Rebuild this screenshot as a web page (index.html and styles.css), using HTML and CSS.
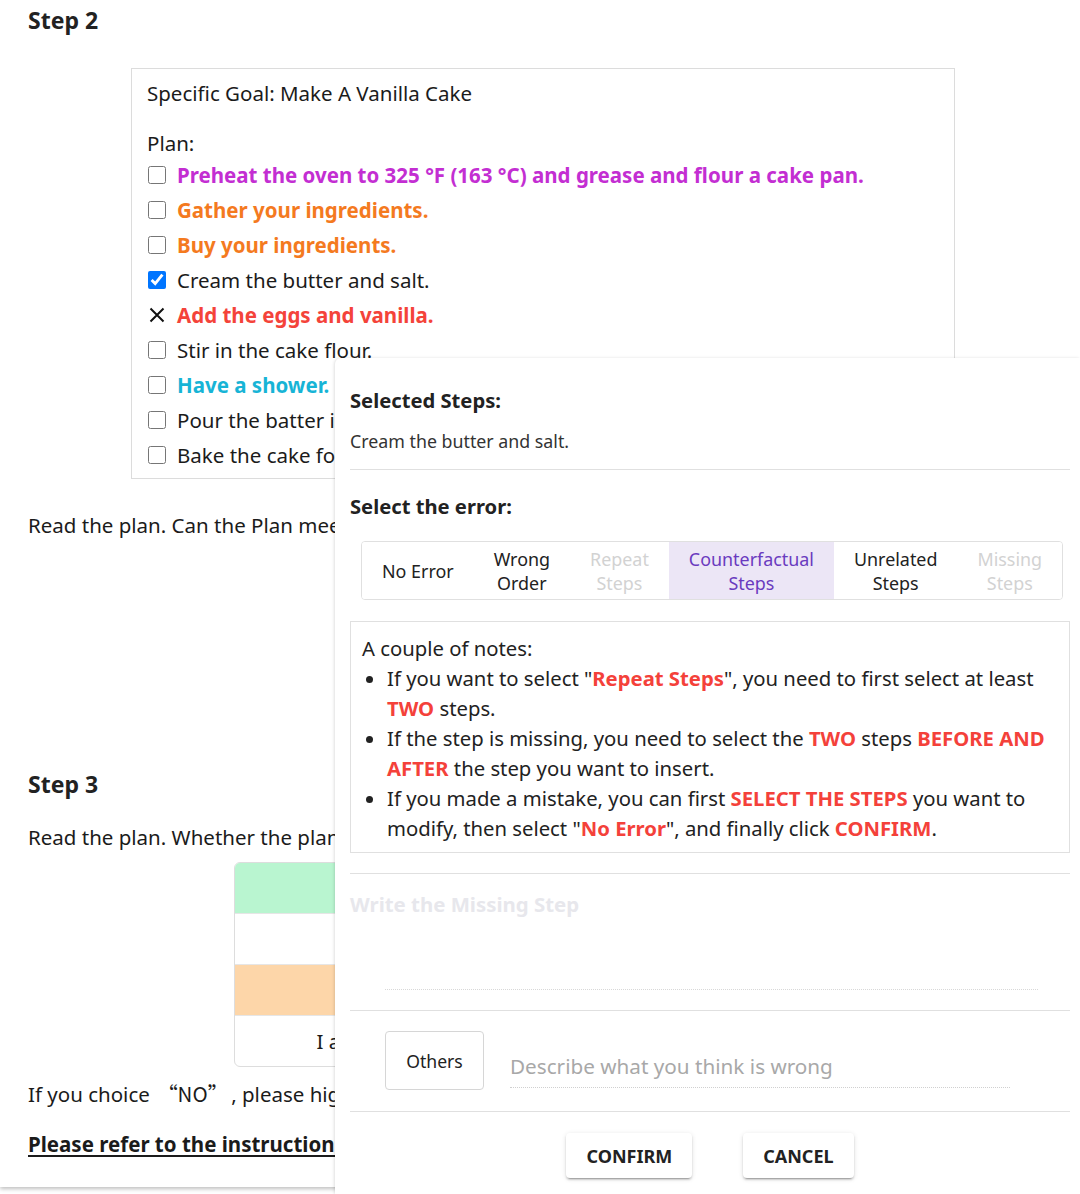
FILE: index.html
```html
<!DOCTYPE html>
<html lang="en">
<head>
<meta charset="utf-8">
<title>Plan annotation</title>
<link rel="stylesheet" href="styles.css">
</head>
<body>
<main class="page">
  <h2 class="step-title">Step 2</h2>
  <section class="plan-box">
    <p class="goal">Specific Goal: Make A Vanilla Cake</p>
    <p class="plan-label">Plan:</p>
    <ul class="plan-list">
      <li class="plan-item"><input type="checkbox" class="cb"><span class="t-purple">Preheat the oven to 325 °F (163 °C) and grease and flour a cake pan.</span></li>
      <li class="plan-item"><input type="checkbox" class="cb"><span class="t-orange">Gather your ingredients.</span></li>
      <li class="plan-item"><input type="checkbox" class="cb"><span class="t-orange">Buy your ingredients.</span></li>
      <li class="plan-item"><input type="checkbox" class="cb" checked><span>Cream the butter and salt.</span></li>
      <li class="plan-item"><svg class="xmark" width="18" height="18" viewBox="0 0 18 18"><path d="M2.5 2.5 L15.5 15.5 M15.5 2.5 L2.5 15.5" stroke="#111" stroke-width="2" fill="none"/></svg><span class="t-red">Add the eggs and vanilla.</span></li>
      <li class="plan-item"><input type="checkbox" class="cb"><span>Stir in the cake flour.</span></li>
      <li class="plan-item"><input type="checkbox" class="cb"><span class="t-cyan">Have a shower.</span></li>
      <li class="plan-item"><input type="checkbox" class="cb"><span>Pour the batter into the pan.</span></li>
      <li class="plan-item"><input type="checkbox" class="cb"><span>Bake the cake for 1 hour 15 minutes.</span></li>
    </ul>
  </section>
  <p class="text question">Read the plan. Can the Plan meet the Specific Goal?</p>
  <div class="answer-space"></div>
  <h2 class="step-title">Step 3</h2>
  <p class="text question2">Read the plan. Whether the plan contains errors?</p>
  <div class="choice-table">
    <div class="choice-row row-green">YES</div>
    <div class="choice-row">The plan has no errors</div>
    <div class="choice-row row-orange">NO</div>
    <div class="choice-row">I am not sure whether the plan meets the goal</div>
  </div>
  <p class="text note">If you choice <span class="cjk">“NO”</span>, please highlight the wrong steps.</p>
  <p class="text refer">Please refer to the instruction for more details.</p>
</main>

<div class="dialog">
  <h3 class="d-title">Selected Steps:</h3>
  <p class="d-selected">Cream the butter and salt.</p>
  <hr class="d-rule">
  <h3 class="d-title second">Select the error:</h3>
  <div class="toggle-group">
    <button class="tg">No Error</button>
    <button class="tg">Wrong<br>Order</button>
    <button class="tg disabled">Repeat<br>Steps</button>
    <button class="tg selected">Counterfactual<br>Steps</button>
    <button class="tg">Unrelated<br>Steps</button>
    <button class="tg disabled">Missing<br>Steps</button>
  </div>
  <div class="notes">
    <p class="notes-head">A couple of notes:</p>
    <ul class="notes-list">
      <li>If you want to select "<b class="hl">Repeat Steps</b>", you need to first select at least <b class="hl">TWO</b> steps.</li>
      <li>If the step is missing, you need to select the <b class="hl">TWO</b> steps <b class="hl">BEFORE AND</b> <b class="hl">AFTER</b> the step you want to insert.</li>
      <li>If you made a mistake, you can first <b class="hl">SELECT THE STEPS</b> you want to modify, then select "<b class="hl">No Error</b>", and finally click <b class="hl">CONFIRM</b>.</li>
    </ul>
  </div>
  <hr class="d-rule r2">
  <h3 class="d-title missing">Write the Missing Step</h3>
  <div class="missing-field"></div>
  <hr class="d-rule r3">
  <div class="others-row">
    <button class="others-btn">Others</button>
    <div class="others-input">Describe what you think is wrong</div>
  </div>
  <hr class="d-rule r4">
  <div class="actions">
    <button class="act">CONFIRM</button>
    <button class="act">CANCEL</button>
  </div>
</div>
</body>
</html>
```

FILE: styles.css
```css
* { box-sizing: border-box; }
html, body {
  margin: 0;
  padding: 0;
  background: #fff;
  width: 1080px;
  height: 1194px;
  overflow: hidden;
}
body {
  font-family: "Noto Sans", "Open Sans", sans-serif;
  color: #1b1b1b;
  position: relative;
}
p { margin: 0; }

.page {
  padding: 5px 28px 28px;
  box-shadow: 0 2px 4px rgba(0,0,0,0.25);
  background: #fff;
}
.step-title {
  margin: 0;
  font-size: 23px;
  font-weight: 700;
  line-height: 30px;
  color: #222;
}
.plan-box {
  margin: 33px 0 0 103px;
  width: 824px;
  border: 1px solid #dcdcdc;
  padding: 9px 15px 6px;
}
.goal, .plan-label, .text {
  font-size: 20.5px;
  line-height: 30px;
}
.plan-label { margin-top: 21px; line-height: 28px; }
.plan-list { list-style: none; margin: 0; padding: 0; }
.plan-item {
  display: flex;
  align-items: center;
  height: 35px;
  font-size: 20.5px;
  gap: 11px;
}
.cb {
  width: 18px;
  height: 18px;
  margin: 0 0 0 1px;
  flex: none;
}
.xmark { flex: none; margin-left: 1px; }
.t-purple { color: #c32ed2; font-weight: 700; }
.t-orange { color: #f47a1f; font-weight: 700; }
.t-red { color: #f4433a; font-weight: 700; }
.t-cyan { color: #17b4d6; font-weight: 700; }

.question { margin-top: 31px; }
.answer-space { height: 229px; }
.question2 { margin-top: 23px; }
.choice-table {
  margin: 10px auto 0;
  width: 612px;
  border: 1px solid #ddd;
  border-radius: 6px;
  overflow: hidden;
}
.choice-row {
  height: 51px;
  display: flex;
  align-items: center;
  justify-content: center;
  font-size: 20.5px;
  border-top: 1px solid #e6e6e6;
}
.choice-row:first-child { border-top: none; height: 50px; }
.row-green { background: #b9f5d0; }
.row-orange { background: #fdd6a9; }
.note { margin-top: 11px; }
.cjk { font-family: "Noto Sans CJK SC", sans-serif; padding: 0 3px 0 2px; }
.refer {
  margin-top: 20px;
  font-weight: 700;
  text-decoration: underline;
  text-underline-offset: 3px;
}

/* dialog overlay */
.dialog {
  position: absolute;
  left: 335px;
  top: 358px;
  right: 0;
  bottom: 0;
  background: #fff;
  border-top-left-radius: 6px;
  box-shadow: -1px 0 3px rgba(0,0,0,0.12);
  padding: 28px 10px 0 15px;
  font-family: "Noto Sans", "Open Sans", sans-serif;
  color: #333;
}
.d-title {
  margin: 0;
  font-size: 20.2px;
  line-height: 28px;
  font-weight: 700;
  color: #222;
}
.d-title.second { margin-top: 22px; }
.d-selected {
  margin-top: 14px;
  font-size: 17.8px;
  line-height: 26px;
  color: #333;
}
.d-rule {
  margin: 15px 0 0;
  border: none;
  border-top: 1px solid #e0e0e0;
  height: 0;
}
.toggle-group {
  margin: 21px 0 0 11px;
  display: inline-flex;
  border: 1px solid #e0e0e0;
  border-radius: 4px;
  height: 59px;
  overflow: hidden;
}
.tg {
  font-family: inherit;
  background: #fff;
  border: none;
  padding: 0 20px;
  font-size: 17.9px;
  line-height: 24px;
  color: #222;
  text-align: center;
}
.tg.disabled { color: #d2d2d2; }
.tg.selected { background: #ece6f6; color: #6a3bbf; }

.notes {
  margin-top: 21px;
  border: 1px solid #e0e0e0;
  padding: 11px 10px 9px 11px;
  font-size: 20.3px;
  line-height: 30px;
  color: #222;
}
.notes-list { margin: 0; padding-left: 25px; }
.hl { color: #f4413a; font-weight: 700; }

.d-rule.r2 { margin-top: 20px; }
.d-title.missing { margin-top: 16px; color: #e7e7ec; font-size: 20.4px; }
.missing-field {
  margin-left: 35px;
  width: 653px;
  height: 72px;
  border-bottom: 1px dotted #d8d8d8;
}
.d-rule.r3 { margin-top: 20px; }
.others-row {
  margin: 20px 0 0 35px;
  display: flex;
  align-items: stretch;
  gap: 26px;
  height: 59px;
}
.others-btn {
  font-family: inherit;
  width: 99px;
  background: #fff;
  border: 1px solid #d6d6d6;
  border-radius: 4px;
  font-size: 17.6px;
  color: #222;
}
.others-input {
  width: 500px;
  align-self: flex-end;
  height: 34px;
  margin-bottom: 2px;
  border-bottom: 1px dotted #d0d0d0;
  font-size: 20.7px;
  line-height: 24px;
  color: #a8a8a8;
}
.d-rule.r4 { margin-top: 21px; }
.actions {
  margin-top: 21px;
  display: flex;
  justify-content: center;
  gap: 51px;
}
.act {
  font-family: inherit;
  height: 45px;
  padding: 0 20px;
  background: #fff;
  border: none;
  border-radius: 4px;
  font-size: 18px;
  font-weight: 700;
  color: #222;
  box-shadow: 0 3px 1px -2px rgba(0,0,0,0.2), 0 2px 2px 0 rgba(0,0,0,0.14), 0 1px 5px 0 rgba(0,0,0,0.12);
}
```
